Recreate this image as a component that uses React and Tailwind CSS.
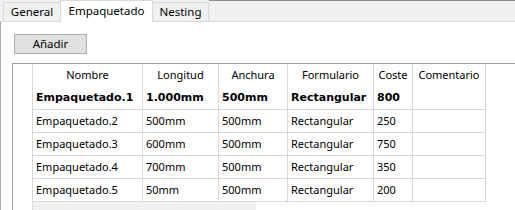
export default function App() {
  const cols = [
    { w: 'w-[110px]', label: 'Nombre' },
    { w: 'w-[76px]', label: 'Longitud' },
    { w: 'w-[69px]', label: 'Anchura' },
    { w: 'w-[86px]', label: 'Formulario' },
    { w: 'w-[39px]', label: 'Coste' },
    { w: 'w-[73px]', label: 'Comentario' },
  ];
  const rows = [
    ['Empaquetado.2', '500mm', '500mm', 'Rectangular', '250', ''],
    ['Empaquetado.3', '600mm', '500mm', 'Rectangular', '750', ''],
    ['Empaquetado.4', '700mm', '500mm', 'Rectangular', '350', ''],
    ['Empaquetado.5', '50mm', '500mm', 'Rectangular', '200', ''],
  ];
  const bold = ['Empaquetado.1', '1.000mm', '500mm', 'Rectangular', '800', ''];
  const font = { fontFamily: '"Noto Sans", "Open Sans", sans-serif' };
  return (
    <div className="w-[515px] h-[210px] bg-white overflow-hidden flex flex-col text-[11px] text-black" style={font}>
      {/* tab strip */}
      <div className="h-[22px] flex items-end bg-[#f0f0f0] border-b border-[#d9d9d9] shrink-0">
        <div className="w-[3px] self-stretch" />
        <div className="w-[58px] h-[19px] border border-b-0 border-[#d9d9d9] flex items-center justify-center pb-[1px] text-[11.5px]">General</div>
        <div className="w-[93px] h-[22px] -ml-[1px] -mb-[1px] bg-white border border-b-0 border-[#d9d9d9] flex items-center justify-center pb-[2px] relative z-10 text-[11.5px]">Empaquetado</div>
        <div className="w-[57px] h-[19px] -ml-[1px] border border-b-0 border-[#d9d9d9] flex items-center justify-center pb-[1px] text-[11.5px]">Nesting</div>
        <div className="flex-1 self-stretch border-t border-[#8c8c8c]" />
      </div>
      {/* body */}
      <div className="flex-1 flex flex-col border-l border-[#a8a8a8]">
        <div className="ml-[13px] mt-[12px] w-[73px] h-[20px] bg-[#e1e1e1] border border-[#adadad] flex items-center justify-center text-[11.5px]">Añadir</div>
        <div className="ml-[11px] mt-[9px] flex-1 border-l border-t border-[#a0a0a0] flex">
          {/* row header column */}
          <div className="w-[20px] border-r border-[#d9d9d9] shrink-0" />
          <div className="flex flex-col">
            <div className="flex h-[23px]">
              {cols.map((c, i) => (
                <div key={i} className={`${c.w} shrink-0 border-r border-[#d9d9d9] flex items-center justify-center pb-[1px]`}>{c.label}</div>
              ))}
            </div>
            <div className="flex h-[23px] border-b border-[#d9d9d9]">
              {bold.map((t, i) => (
                <div key={i} className={`${cols[i].w} shrink-0 border-r border-[#d9d9d9] flex items-center pl-[3px] font-bold text-[11px]`} style={{ fontFamily: '"DejaVu Sans", Verdana, sans-serif' }}>{t}</div>
              ))}
            </div>
            {rows.map((r, ri) => (
              <div key={ri} className="flex h-[23px] border-b border-[#d9d9d9]">
                {r.map((t, i) => (
                  <div key={i} className={`${cols[i].w} shrink-0 border-r border-[#d9d9d9] flex items-center pl-[3px] pt-[1px]`}>{t}</div>
                ))}
              </div>
            ))}
            <div className="flex-1 w-[223px] bg-[#f0f0f0]" />
          </div>
        </div>
      </div>
    </div>
  );
}
